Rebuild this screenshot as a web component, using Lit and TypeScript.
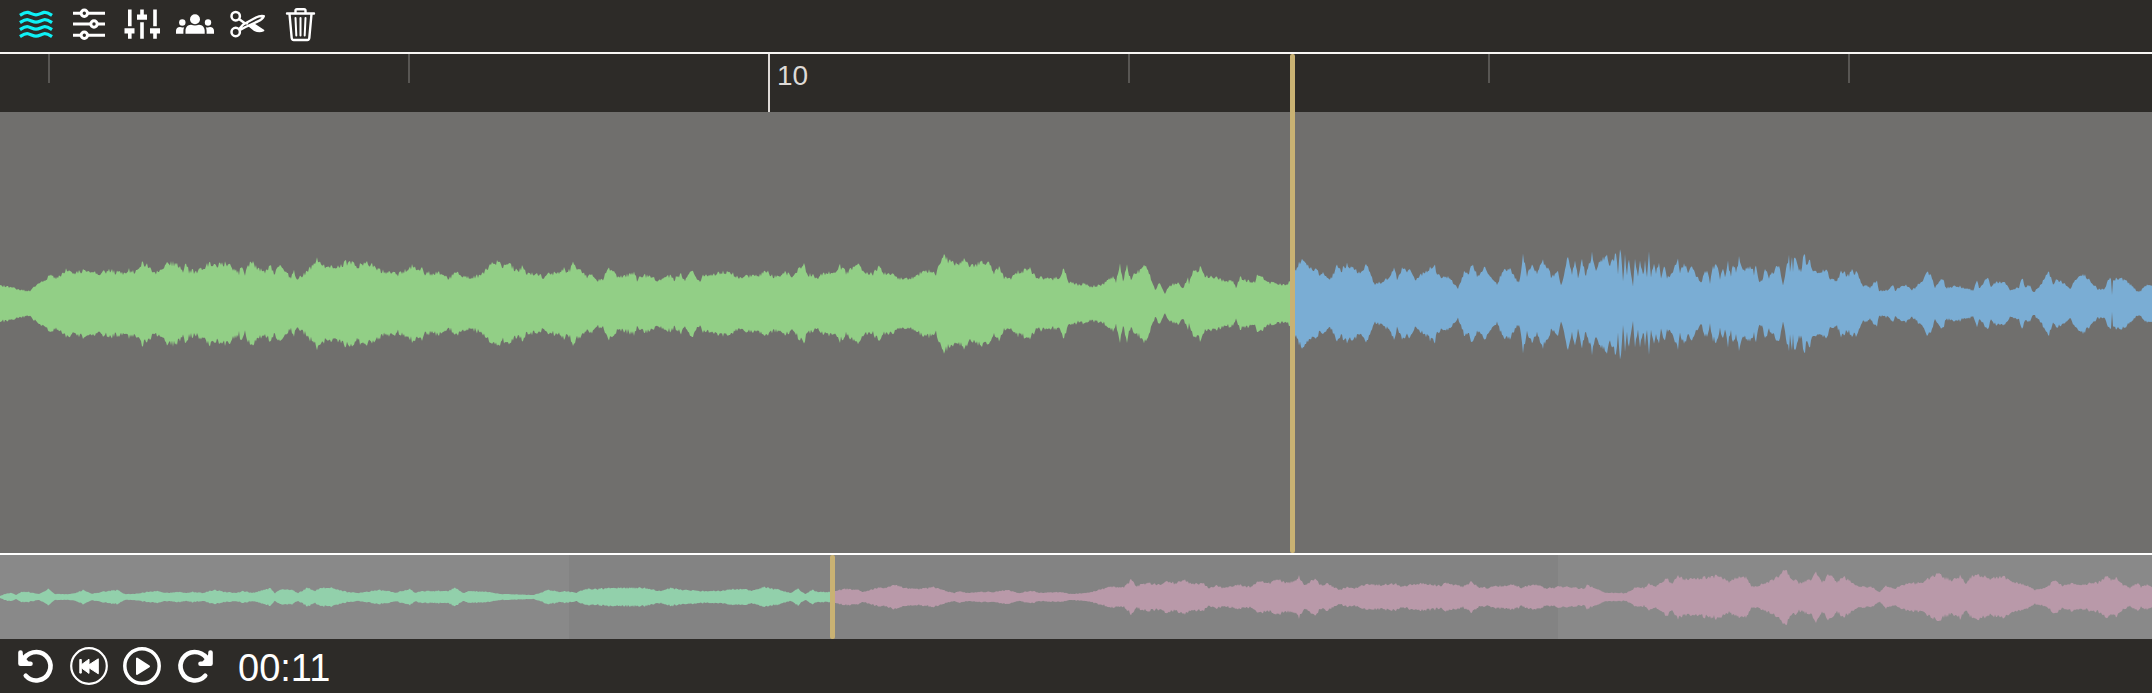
import { LitElement, html, svg, css } from "lit";
import { customElement, property } from "lit/decorators.js";

const VIEW_WIDTH = 2152;

// Peak envelopes: "position:peak" pairs, position in pixels of a full-width view.
const DETAIL_PEAKS = `0:18 14:15 29:12 38:20 52:28 57:25 67:35 74:30 84:33 91:30 101:30 108:33 115:31 124:31 129:33 134:31
142:41 148:37 155:30 164:36 169:41 176:39 183:32 186:41 189:32 198:32 208:39 215:38 226:40 239:30 240:38 245:30 250:42 257:36
265:32 270:38 274:31 281:38 286:32 291:25 294:32 297:24 303:29 308:32 317:43 324:37 331:36 339:38 350:42 358:37 368:40 375:36
382:32 398:29 413:37 418:32 422:36 425:30 441:30 449:25 456:31 470:25 482:29 492:39 499:41 505:36 510:39 517:32 522:36 527:30
540:30 544:24 549:30 557:30 564:35 568:31 573:39 578:33 583:32 588:26 592:31 595:24 602:23 608:34 615:31 618:26 635:30 637:23
643:28 650:27 659:23 670:28 674:24 681:30 685:22 691:34 697:24 700:23 704:29 712:28 721:31 729:31 740:26 750:27 759:28 766:33
771:28 779:26 784:32 791:28 796:29 800:36 804:39 808:29 818:26 826:31 834:29 840:37 847:30 853:37 860:38 864:31 872:29 879:36
884:30 893:28 900:25 912:25 920:30 928:33 936:29 939:37 944:46 950:42 958:39 963:44 969:38 975:38 984:41 991:38 994:31 999:35
1004:26 1010:25 1017:31 1030:34 1035:27 1049:24 1060:26 1064:35 1068:22 1080:18 1083:20 1090:17 1101:18 1108:23 1113:26 1116:22
1120:40 1123:22 1127:38 1131:22 1135:32 1141:32 1145:39 1148:32 1152:23 1155:13 1160:21 1165:9 1169:18 1178:20 1183:15 1188:25
1189:20 1194:34 1197:30 1200:36 1204:28 1214:26 1225:22 1233:23 1236:15 1240:26 1249:22 1255:22 1257:28 1263:25 1269:21 1287:18
1290:23 1295:33 1301:44 1306:42 1312:33 1316:34 1321:28 1323:33 1327:24 1331:25 1337:37 1341:33 1347:38 1355:33 1361:30 1365:38
1369:33 1374:19 1383:22 1391:27 1394:37 1397:24 1402:34 1409:33 1412:32 1415:24 1424:30 1429:35 1434:40 1438:28 1450:25 1458:14
1464:30 1469:30 1473:40 1477:28 1486:36 1491:25 1497:19 1503:33 1510:36 1514:28 1519:20 1523:47 1527:28 1532:40 1537:30 1543:41
1548:37 1551:26 1558:32 1561:18 1568:46 1572:30 1575:40 1578:27 1582:42 1586:28 1592:49 1596:33 1600:42 1606:48 1610:37 1616:49
1618:30 1620:58 1623:24 1625:47 1627:30 1629:45 1633:18 1635:42 1638:25 1640:42 1643:27 1645:42 1647:27 1649:49 1651:27 1654:42
1656:32 1659:40 1661:25 1664:38 1667:25 1673:33 1678:42 1680:30 1684:39 1688:32 1692:38 1696:28 1701:21 1707:35 1710:21 1713:37
1718:36 1720:25 1723:37 1725:25 1728:40 1731:28 1733:40 1736:33 1739:45 1743:32 1751:36 1754:30 1756:39 1759:23 1762:21 1765:34
1769:26 1774:32 1779:40 1783:17 1786:33 1789:48 1790:34 1792:50 1793:34 1794:48 1797:38 1801:32 1804:52 1807:36 1810:44 1813:32
1820:30 1825:35 1830:25 1837:23 1841:32 1849:27 1852:35 1854:28 1856:32 1861:21 1863:16 1867:19 1870:15 1877:24 1879:13 1888:13
1893:18 1895:13 1905:19 1912:13 1922:22 1926:30 1930:30 1935:16 1943:25 1946:15 1951:17 1959:17 1973:13 1977:23 1979:15 1988:27
1991:17 1996:22 2006:20 2010:13 2019:16 2022:26 2025:17 2030:18 2033:11 2039:16 2045:25 2049:32 2053:18 2056:24 2064:20 2071:15
2074:22 2081:27 2085:28 2093:19 2098:14 2105:15 2108:23 2111:26 2112:8 2113:23 2120:26 2129:20 2139:11 2146:18 2152:18`;

const OVERVIEW_PEAKS = `0:1 5:3 11:4 16:2 21:5 28:5 39:3 48:8 55:3 69:3 76:4 83:7 92:3 101:5 117:7 125:3 133:3 147:5 158:6 165:4
179:5 186:4 193:5 202:4 215:7 225:5 236:4 243:6 253:4 270:9 275:4 282:8 292:7 298:4 307:9 315:6 321:9 333:9 347:5 360:4 379:7
388:6 395:4 410:8 415:4 422:6 448:6 455:9 464:4 469:6 487:5 500:3 533:2 549:7 560:5 565:6 576:4 585:8 597:8 615:9 643:9 661:6
671:9 684:7 702:6 720:6 734:8 743:8 752:6 764:10 780:7 790:4 798:8 805:3 812:7 819:5 830:5 835:6 846:8 858:7 863:5 878:9 885:9
897:12 904:9 920:8 933:10 945:6 954:4 960:6 966:4 982:5 995:5 1008:7 1018:4 1032:6 1041:4 1060:5 1071:3 1087:4 1099:7 1110:10
1124:10 1131:17 1137:11 1149:14 1158:12 1169:16 1175:13 1184:17 1191:13 1204:13 1209:9 1216:11 1223:9 1239:12 1250:10 1257:15
1271:14 1278:18 1285:14 1294:15 1299:21 1304:12 1315:18 1321:12 1328:13 1339:7 1348:10 1354:8 1363:12 1381:12 1396:13 1402:10
1413:13 1432:13 1440:11 1445:14 1463:10 1472:15 1479:10 1488:9 1497:11 1504:11 1512:13 1522:9 1534:13 1544:9 1554:9 1559:11
1576:9 1584:8 1587:12 1597:8 1606:4 1626:4 1635:9 1644:9 1649:13 1656:11 1667:18 1672:14 1678:20 1685:17 1691:19 1699:18 1708:20
1720:21 1728:15 1737:20 1746:19 1752:10 1765:13 1776:19 1785:27 1792:19 1799:14 1810:17 1816:24 1822:15 1830:23 1837:15 1843:20
1851:15 1858:10 1871:10 1880:5 1885:11 1894:8 1905:13 1921:14 1930:19 1938:23 1944:19 1953:17 1961:21 1966:13 1973:22 1983:21
1990:19 1996:20 2004:20 2012:15 2026:12 2035:7 2046:9 2055:17 2062:11 2071:14 2080:11 2091:14 2098:14 2106:21 2112:17 2117:19
2123:12 2130:9 2137:14 2141:10 2147:12 2152:10`;

/** Pseudo-random grain in -1..1, stable for a given sample index. */
const grain = (i: number) => {
  const n = Math.sin(i * 127.1 + 11.7) * 43758.5453;
  return (n - Math.floor(n)) * 2 - 1;
};

/** Closed outline, mirrored about y = 0, of the envelope between two positions. */
function outline(peaks: string, from: number, to: number, roughness: number): string {
  const points = peaks.split(/\s+/).map((p) => p.split(":").map(Number));
  const upper: string[] = [];
  const lower: string[] = [];
  let k = 0;
  for (let x = from; x <= to; x += 1) {
    while (k < points.length - 2 && points[k + 1][0] <= x) k += 1;
    const [x0, p0] = points[k];
    const [x1, p1] = points[k + 1];
    const base = p0 + ((p1 - p0) * (x - x0)) / (x1 - x0);
    const swing = base * roughness;
    const shared = grain(x) * swing;
    upper.push(`${x} ${(-(base + shared)).toFixed(1)}`);
    lower.unshift(`${x} ${(base + shared + grain(x + 5000) * swing * 0.4).toFixed(1)}`);
  }
  return `M${upper.join("L")}L${lower.join("L")}Z`;
}

const turn = svg`<g fill="none" stroke="currentColor" stroke-width="4.6" stroke-linecap="round" stroke-linejoin="round">
  <path d="M6.5 9.8C9.5 6 13.5 4 18.5 4a14.2 14.2 0 1 1-10.700 23.800"/><path d="M2.500 4.500v11.300H12.500"/></g><path fill="currentColor" d="M2.500 4l10 12h-10z"/>`;

const icons: Record<string, unknown> = {
  waves: svg`<g fill="none" stroke="currentColor" stroke-width="3.2">
    ${[8, 15.3, 22.3, 29.3].map(
      (y) => svg`<path d="M2 ${y + 1.4}C5 ${y - 0.6} 7 ${y - 2.2} 10 ${y - 1.6}C13 ${y - 1} 15 ${y + 0.9} 18 ${y + 0.9}S23 ${y - 1} 26 ${y - 1.6}C29 ${y - 2.2} 31 ${y - 0.6} 34 ${y + 1.4}"/>`
    )}</g>`,
  sliders: svg`<g fill="none" stroke="currentColor" stroke-width="3">
    <path d="M2 7.3H9.8M16.8 7.3H34M2 18H19.5M26.5 18H34M2 29.3H9.8M16.8 29.3H34"/>
    <g><circle cx="13.3" cy="7.3" r="3.2"/><circle cx="23" cy="18" r="3.2"/><circle cx="13.3" cy="29.3" r="3.2"/></g></g>`,
  mixer: svg`<path fill="currentColor" d="M4 3.500h3.600v16.800h-3.600zM.5 22.300h10v5.200H7.600v5.300h-3.600v-5.300H.5zM16.200 3.500h3.600v5h3.200v5.200H13V8.500h3.200zM16.200 16.300h3.600v16.500h-3.600zM29.200 3.500h3.600v16.800h-3.600zM26 22.300H36v5.200h-3.200v5.300h-3.600v-5.300h-3.200z"/>`,
  group: svg`<g fill="currentColor"><circle cx="18" cy="13.200" r="5"/><circle cx="5.300" cy="16.500" r="3.200"/><circle cx="31" cy="16.500" r="3.200"/>
    <path d="M8.500 27.800v-3.300c0-3 2-5.800 5.500-5.800q4 1.600 8 0c3.500 0 5.700 2.800 5.700 5.800v3.300zM-1 27.800v-3c0-2.300 1.600-3.700 4-3.700q2 .8 4.200.2-.8 1.600-.8 3.700v2.800zM37 27.800v-3c0-2.300-1.600-3.700-4-3.700q-2 .8-4.200.2.800 1.600.8 3.700v2.800z"/></g>`,
  scissors: svg`<g fill="none" stroke="currentColor" stroke-linejoin="round"><circle cx="5.700" cy="10.200" r="4.200" stroke-width="2.500"/><circle cx="5.700" cy="26" r="4.200" stroke-width="2.500"/>
    <path stroke-width="2.400" d="M9 13l5.500 4M9.200 23l4-4.500L26 11.500c2.500-1.200 5-1.700 7.800-1.300-.8 2.600-3 4-6 5.200L15.500 21l-5.500 3"/>
    <path fill="currentColor" stroke-width="1.600" d="M19 20l5-1.800 9.500 6.300c-3 1.600-6.500 1-9.500-.5z"/></g><circle cx="17" cy="17.500" r="1.200" fill="currentColor"/>`,
  trash: svg`<g fill="none" stroke="currentColor" stroke-width="2.400" stroke-linecap="round" stroke-linejoin="round">
    <path d="M4 7.500h27M12.500 7V4.500q0-1.300 1.500-1.300h7q1.500 0 1.500 1.300V7M6.500 8l2.200 24q.2 2 2 2h13.600q1.800 0 2-2l2.200-24"/>
    <path stroke-width="2" d="M12.500 12l.8 17.500M17.500 12v17.500M22.500 12l-.8 17.500"/></g>`,
  undo: turn,
  rewind: svg`<circle cx="18" cy="18" r="17.800" fill="none" stroke="currentColor" stroke-width="2.200"/>
    <path fill="currentColor" stroke="currentColor" stroke-linejoin="round" d="M8.800 11.500h1.500v5.300L18 11.200v5.600l9.300-6v15l-9.300-6v5.600l-7.700-5.600v5.300H8.800z"/>`,
  play: svg`<circle cx="18" cy="18" r="17.200" fill="none" stroke="currentColor" stroke-width="3.500"/>
    <path fill="currentColor" stroke="currentColor" stroke-width="2" stroke-linejoin="round" d="M13 10.500v15.500l12-7.700z"/>`,
  redo: svg`<g transform="matrix(-1 0 0 1 36 0)">${turn}</g>`,
};

@customElement("icon-button")
class IconButton extends LitElement {
  @property() icon = "";
  @property() label = "";
  static styles = css`
    :host { display: block; }
    button {
      display: block; width: 36px; height: 36px; padding: 0; border: 0;
      background: none; color: inherit; cursor: pointer;
    }
    svg { display: block; width: 36px; height: 36px; overflow: visible; }
  `;
  render() {
    return html`<button type="button" aria-label=${this.label}>
      <svg viewBox="0 0 36 36" aria-hidden="true">${icons[this.icon]}</svg>
    </button>`;
  }
}

@customElement("wave-form")
class WaveForm extends LitElement {
  @property() peaks = "";
  @property({ type: Number }) height = 100;
  @property({ type: Number }) playhead = 0;
  @property({ type: Number }) roughness = 0.06;
  static styles = css`
    :host { display: block; }
    svg { display: block; width: 100%; height: 100%; }
    .played { fill: var(--played); }
    .ahead { fill: var(--ahead); }
  `;
  render() {
    const half = this.height / 2;
    return html`<svg viewBox="0 ${-half} ${VIEW_WIDTH} ${this.height}" preserveAspectRatio="none" aria-hidden="true">
      <path class="played" d=${outline(this.peaks, 0, this.playhead, this.roughness)}></path>
      <path class="ahead" d=${outline(this.peaks, this.playhead, VIEW_WIDTH, this.roughness)}></path>
    </svg>`;
  }
}

const percent = (x: number) => `${(x / VIEW_WIDTH) * 100}%`;

@customElement("app-root")
class AppRoot extends LitElement {
  static styles = css`
    :host {
      display: flex; flex-direction: column; min-height: 100vh;
      background: #2d2b28; color: #fff;
      font-family: "Liberation Sans", Arial, sans-serif;
    }
    .bar { display: flex; align-items: center; gap: 17px; padding: 0 18px; }
    .tools { height: 48px; padding-bottom: 4px; border-bottom: 2px solid #f8f6f4; }
    .active { color: #0ff0f5; }
    .detail {
      position: relative; flex: 1; display: grid;
      grid-template-rows: 58px 1fr; background: #706f6d;
      border-bottom: 2px solid #fff;
    }
    .ruler { grid-area: 1 / 1; position: relative; background: #2d2b28; overflow: hidden; }
    .tick {
      position: absolute; top: 0; height: 29px; width: 2px; margin-left: -1px;
      background: #585653;
    }
    .major { height: 100%; background: #dedad7; }
    .tick span { position: absolute; left: 9px; top: 6px; font-size: 28px; line-height: 32px; color: #dedad7; }
    .detail wave-form { grid-area: 1 / 1 / 3 / 2; min-height: 0; --played: #92cf86; --ahead: #7aadd4; }
    .playhead {
      position: absolute; top: 0; bottom: 0; width: 5px; margin-left: -2px;
      border-radius: 2px; background: #c9b273;
    }
    .overview { position: relative; height: 84px; background: #898989; }
    .overview wave-form { position: relative; height: 84px; --played: #92d0ab; --ahead: #b999a9; }
    .window { position: absolute; top: 0; bottom: 0; background: #838383; }
    .transport { height: 54px; }
    time { padding: 4px 0 0 8px; font-size: 38px; line-height: 44px; }
  `;

  render() {
    const tools = [
      ["waves", "Waveform"], ["sliders", "Settings"], ["mixer", "Mixer"],
      ["group", "Speakers"], ["scissors", "Cut"], ["trash", "Delete"],
    ];
    const transport = [["undo", "Undo"], ["rewind", "Back to start"], ["play", "Play"], ["redo", "Redo"]];
    const ticks = [49, 409, 769, 1129, 1489, 1849];
    return html`
      <header class="bar tools">
        ${tools.map(([icon, label], i) => html`<icon-button class=${i === 0 ? "active" : ""} icon=${icon} label=${label}></icon-button>`)}
      </header>
      <section class="detail">
        <div class="ruler">
          ${ticks.map((x) => html`<div class="tick ${x === 769 ? "major" : ""}" style="left:${percent(x)}">${x === 769 ? html`<span>10</span>` : ""}</div>`)}
        </div>
        <wave-form .peaks=${DETAIL_PEAKS} .height=${499} .playhead=${1293} .roughness=${0.08}></wave-form>
        <div class="playhead" style="left:${percent(1292)}"></div>
      </section>
      <section class="overview">
        <div class="window" style="left:${percent(569)};width:${percent(989)}"></div>
        <wave-form .peaks=${OVERVIEW_PEAKS} .height=${84} .playhead=${832} .roughness=${0.1}></wave-form>
        <div class="playhead" style="left:${percent(832)}"></div>
      </section>
      <footer class="bar transport">
        ${transport.map(([icon, label]) => html`<icon-button icon=${icon} label=${label}></icon-button>`)}
        <time>00:11</time>
      </footer>
    `;
  }
}
